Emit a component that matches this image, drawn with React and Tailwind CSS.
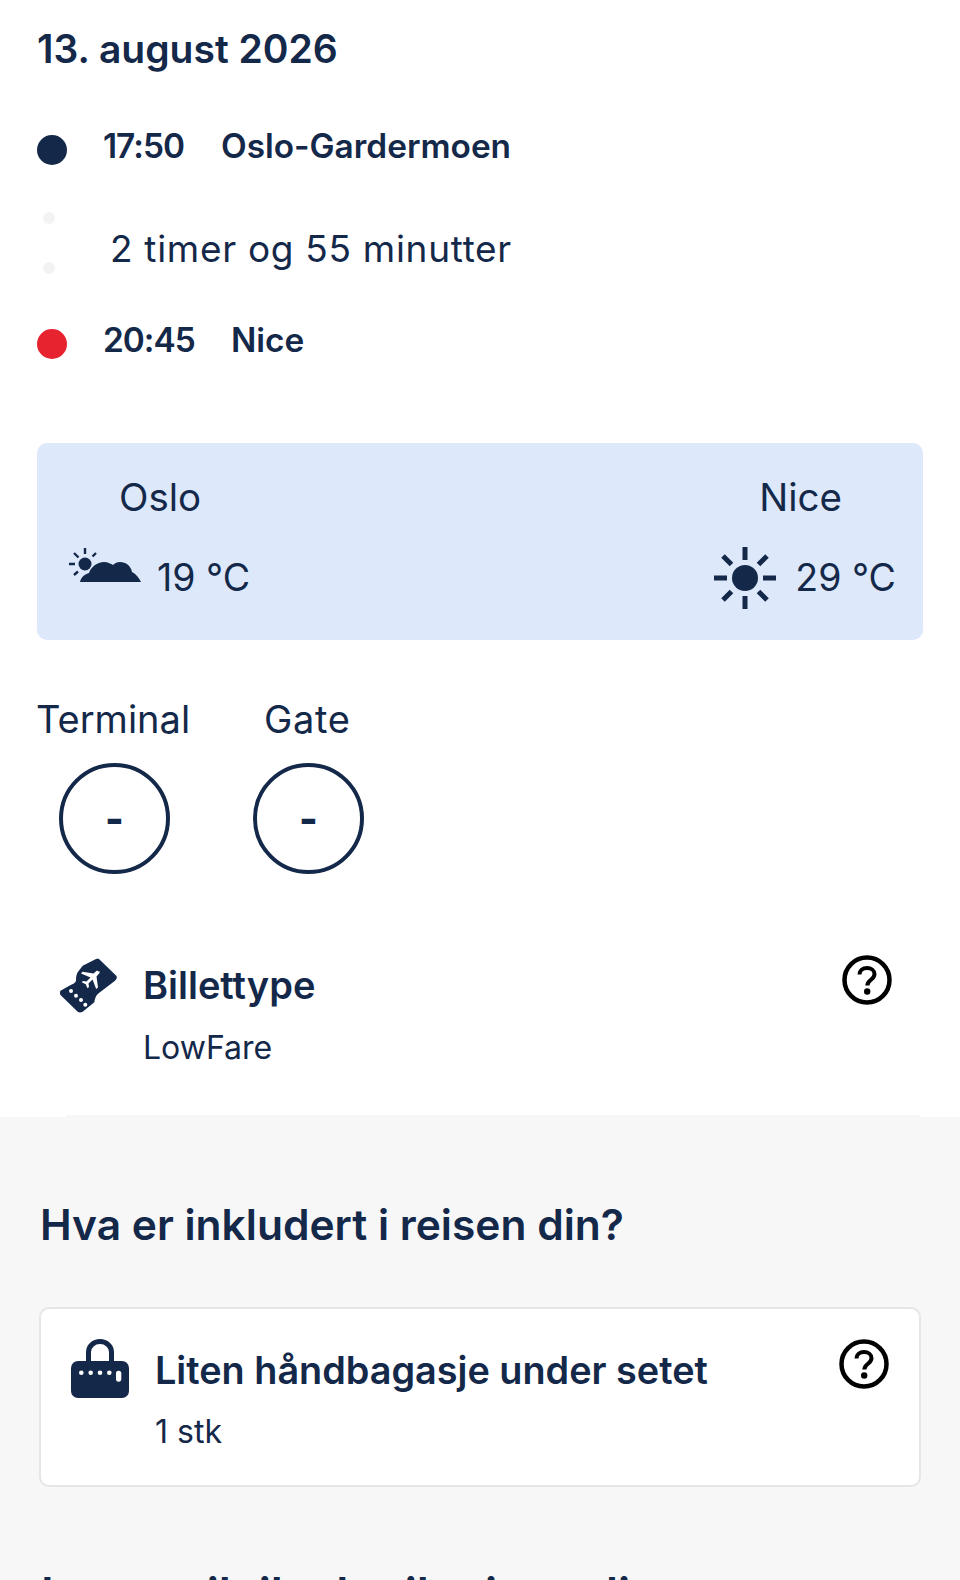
const navy = "#142849";

function QuestionIcon() {
  return (
    <svg width="50" height="50" viewBox="0 0 50 50" fill="none">
      <circle cx="25" cy="25" r="22.5" stroke="#000" strokeWidth="4.5" />
      <path d="M17.500 19.500c0-4 3.200-6.500 7.500-6.500s7.500 2.600 7.500 6.200c0 5.500-7.200 5.600-7.200 11.300" stroke="#000" strokeWidth="4" />
      <circle cx="25.200" cy="36.500" r="3.200" fill="#000" />
    </svg>
  );
}

function PartlySunny() {
  return (
    <svg width="72" height="34" viewBox="0 0 72 34" fill={navy}>
      <circle cx="16" cy="16" r="6.500" />
      <path d="M16 0v6M0 16h6M5 5l4.500 4.500M27 5l-3.500 3.500M5 27l4-3.500" stroke={navy} strokeWidth="2.400" />
      <path d="M11 34C12 29 16 26 20 25 22 19 28 14 35 14 39 14 42 16 44 17 46 15 48 14 51 14 57 14 62 18 63 24 67 26 70 30 72 34Z" />
    </svg>
  );
}

function Sun() {
  return (
    <svg width="62" height="62" viewBox="0 0 62 62" fill={navy}>
      <circle cx="31" cy="31" r="13" />
      <path d="M31 0v13M31 49v13M0 31h13M49 31h13M9 9l8.500 8.500M53 9l-8.500 8.500M9 53l8.500-8.500M53 53l-8.500-8.500" stroke={navy} strokeWidth="5" />
    </svg>
  );
}

function TicketIcon() {
  return (
    <svg width="57" height="55" viewBox="0 0 57 55">
      <path
        fill={navy}
        d="M22.700 7.700 36 1c1-.5 2-.5 3 0L56.500 18c.5 1 .5 3-1.500 4.700L37.700 36c-2 2-3 5-3.400 8.300L22.700 53.700c-2 1-3.500 1-5 0L.5 37c-.7-1-.7-3 0-4.300L9.300 27.700C13 26 15.500 25 16 22.700 16 19 16.500 16 17.700 14.300Z"
      />
      <path fill="#fff" d="M38.500 13.500c1-.5 1.500 0 1 1.500l-3 3.500 1.500 11-1.800 1.500-3.700-9.500-4 4 .5 3.500-1.500 1.300-1.800-4-4-2 1.300-1.300 3.500.5 4-4-9.500-4 1.500-1.700 11 1.700 3.500-3Z" />
      <g fill="#fff">
        <circle cx="11" cy="33" r="2" />
        <circle cx="16" cy="37.700" r="2" />
        <circle cx="21" cy="42" r="2" />
        <circle cx="25.300" cy="46.700" r="2" />
      </g>
    </svg>
  );
}

function BagIcon() {
  return (
    <svg width="58" height="60" viewBox="0 0 58 60">
      <path d="M17.500 22v-9a11.500 10.500 0 0 1 23 0v9" fill="none" stroke={navy} strokeWidth="5" />
      <rect x="0" y="22" width="58" height="37" rx="7" fill={navy} />
      <g fill="#fff">
        <circle cx="10.300" cy="33.700" r="2.300" />
        <circle cx="19.700" cy="33.700" r="2.300" />
        <circle cx="29" cy="33.700" r="2.300" />
        <circle cx="38.300" cy="33.700" r="2.300" />
        <rect x="45" y="31.700" width="5.300" height="11" rx="2.600" />
      </g>
    </svg>
  );
}

function Dash() {
  return (
    <div className="flex h-[111px] w-[111px] items-center justify-center rounded-full border-[4px] border-[#142849] text-[40px] font-extrabold">
      -
    </div>
  );
}

export default function App() {
  return (
    <div className="h-[1580px] overflow-hidden bg-white font-['Inter','Liberation_Sans',sans-serif] text-[#142849]">
      <div className="h-[1115px] px-[37px] pt-[25px]">
        <h1 className="text-[39px] leading-[48px] font-semibold">13. august 2026</h1>

        <div className="mt-[50px] flex h-[46px] items-center text-[33.400px] font-semibold">
          <span className="mt-2 h-[30px] w-[30px] rounded-full bg-[#142849]" />
          <span className="ml-[36px] w-[118px] tracking-[-1px]">17:50</span>
          <span>Oslo-Gardermoen</span>
        </div>

        <div className="mt-[30px] flex h-[100px] items-center">
          <div className="mb-[13px] flex h-[62px] w-[30px] flex-col justify-between pl-[6px]">
            <span className="h-3 w-3 rounded-full bg-[#f3f3f3]" />
            <span className="h-3 w-3 rounded-full bg-[#f3f3f3]" />
          </div>
          <span className="ml-[43px] text-[37px] tracking-[0.7px]">2 timer og 55 minutter</span>
        </div>

        <div className="mt-[18px] flex h-[46px] items-center text-[33.400px] font-semibold">
          <span className="mt-2 h-[30px] w-[30px] rounded-full bg-[#e6232e]" />
          <span className="ml-[36px] w-[128px] tracking-[-1px]">20:45</span>
          <span>Nice</span>
        </div>

        <div className="mt-[80px] flex h-[197px] justify-between rounded-[10px] bg-[#dde8fb] pt-[31px] pr-[27px] pl-[32px]">
          <div>
            <div className="pl-[50px] text-[38.500px] leading-[46px]">Oslo</div>
            <div className="mt-[35px] flex items-center">
              <div className="mt-[-13px] mb-[13px]"><PartlySunny /></div>
              <span className="ml-[16px] text-[37.500px] leading-[46px]">19 °C</span>
            </div>
          </div>
          <div>
            <div className="pl-[45px] text-[38.500px] leading-[46px]">Nice</div>
            <div className="mt-[27px] flex items-center">
              <Sun />
              <span className="ml-[19px] text-[37.500px] leading-[46px]">29 °C</span>
            </div>
          </div>
        </div>

        <div className="mt-[56px] flex text-[38px] leading-[46px]">
          <div className="ml-[-1px] flex w-[228px] flex-col items-start">
            <span>Terminal</span>
            <div className="mt-[21px] ml-[23px]"><Dash /></div>
          </div>
          <div className="flex flex-col items-start">
            <span className="tracking-[0.7px]">Gate</span>
            <div className="mt-[21px] ml-[-11px]"><Dash /></div>
          </div>
        </div>

        <div className="mt-[84px] flex items-start pl-[23px]">
          <TicketIcon />
          <div className="ml-[26px] flex-1">
            <div className="mt-[4px] text-[38px] leading-[46px] font-semibold">Billettype</div>
            <div className="mt-[19px] text-[32px] leading-[42px]">LowFare</div>
          </div>
          <div className="mt-[-3px] mr-[31px]"><QuestionIcon /></div>
        </div>
      </div>

      <div className="h-[2px] bg-white pr-[40px] pl-[66px]">
        <div className="h-full bg-[#f7f7f8]" />
      </div>

      <div className="h-[463px] bg-[#f7f7f8] px-[39px]">
        <h2 className="ml-px pt-[82px] text-[42.500px] leading-[52px] font-semibold">Hva er inkludert i reisen din?</h2>

        <div className="mt-[56px] flex h-[180px] items-start rounded-[10px] border-2 border-[#e6e6e7] bg-white pt-[30px] pr-[30px] pl-[30px]">
          <BagIcon />
          <div className="ml-[26px] flex-1">
            <div className="mt-[8px] text-[37.800px] leading-[46px] font-semibold">Liten håndbagasje under setet</div>
            <div className="mt-[18px] text-[32px] leading-[42px]">1 stk</div>
          </div>
          <QuestionIcon />
        </div>

        <h2 className="mt-[81px] ml-[2px] text-[46px] leading-[52px] font-semibold">Legge til tilvalg til reisen din</h2>
      </div>
    </div>
  );
}
